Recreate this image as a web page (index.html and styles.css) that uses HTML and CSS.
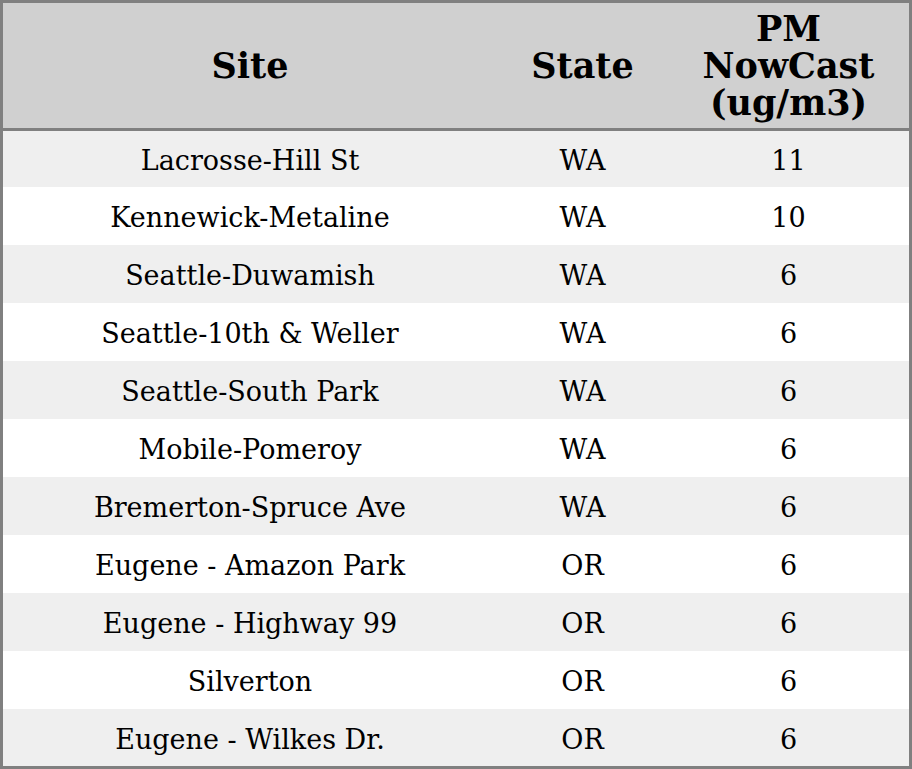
FILE: index.html
```html
<!DOCTYPE html>
<html>
<head>
<meta charset="utf-8">
<link rel="stylesheet" href="styles.css">
</head>
<body>
<table class="aq">
<colgroup><col class="c-site"><col class="c-state"><col class="c-pm"></colgroup>
<thead>
<tr><th>Site</th><th>State</th><th>PM<br>NowCast<br>(ug/m3)</th></tr>
</thead>
<tbody>
<tr><td>Lacrosse-Hill St</td><td>WA</td><td>11</td></tr>
<tr><td>Kennewick-Metaline</td><td>WA</td><td>10</td></tr>
<tr><td>Seattle-Duwamish</td><td>WA</td><td>6</td></tr>
<tr><td>Seattle-10th &amp; Weller</td><td>WA</td><td>6</td></tr>
<tr><td>Seattle-South Park</td><td>WA</td><td>6</td></tr>
<tr><td>Mobile-Pomeroy</td><td>WA</td><td>6</td></tr>
<tr><td>Bremerton-Spruce Ave</td><td>WA</td><td>6</td></tr>
<tr><td>Eugene - Amazon Park</td><td>OR</td><td>6</td></tr>
<tr><td>Eugene - Highway 99</td><td>OR</td><td>6</td></tr>
<tr><td>Silverton</td><td>OR</td><td>6</td></tr>
<tr><td>Eugene - Wilkes Dr.</td><td>OR</td><td>6</td></tr>
</tbody>
</table>
</body>
</html>
```
FILE: styles.css
```css
html, body {
  margin: 0;
  padding: 0;
  background: #ffffff;
}
.aq {
  width: 912px;
  border-collapse: separate;
  border-spacing: 0;
  border: 3px solid #808080;
  font-family: "DejaVu Serif", serif;
  color: #000000;
  table-layout: fixed;
}
.c-site { width: 494px; }
.c-state { width: 171px; }
.c-pm { width: 241px; }
.aq th {
  background: #d0d0d0;
  font-size: 35px;
  font-weight: bold;
  height: 125px;
  padding: 0;
  text-align: center;
  vertical-align: middle;
  border-bottom: 3px solid #808080;
  line-height: 37px;
}
.aq td {
  font-size: 27px;
  line-height: 32px;
  text-align: center;
  vertical-align: middle;
  padding: 4px 0 0;
  height: 54px;
}
.aq tbody tr:nth-child(odd) td { background: #efefef; }
.aq tbody tr:first-child td { height: 52px; }
.aq tbody tr:last-child td { height: 53px; }
```
